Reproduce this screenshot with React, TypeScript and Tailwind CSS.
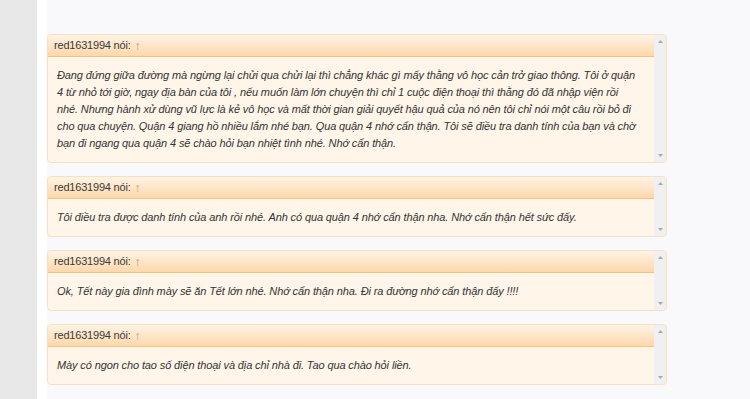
import React from "react";

const posts: string[][] = [
  [
    "Đang đứng giữa đường mà ngừng lại chửi qua chửi lại thì chẳng khác gì mấy thằng vô học cản trở giao thông. Tôi ở quận",
    "4 từ nhỏ tới giờ, ngay địa bàn của tôi , nếu muốn làm lớn chuyện thì chỉ 1 cuộc điện thoại thì thằng đó đã nhập viện rồi",
    "nhé. Nhưng hành xử dùng vũ lực là kẻ vô học và mất thời gian giải quyết hậu quả của nó nên tôi chỉ nói một câu rồi bỏ đi",
    "cho qua chuyện. Quận 4 giang hồ nhiều lắm nhé bạn. Qua quận 4 nhớ cẩn thận. Tôi sẽ điều tra danh tính của bạn và chờ",
    "bạn đi ngang qua quận 4 sẽ chào hỏi bạn nhiệt tình nhé. Nhớ cẩn thận.",
  ],
  [
    "Tôi điều tra được danh tính của anh rồi nhé. Anh có qua quận 4 nhớ cẩn thận nha. Nhớ cẩn thận hết sức đấy.",
  ],
  [
    "Ok, Tết này gia đình mày sẽ ăn Tết lớn nhé. Nhớ cẩn thận nha. Đi ra đường nhớ cẩn thận đấy !!!!",
  ],
  [
    "Mày có ngon cho tao số điện thoại và địa chỉ nhà đi. Tao qua chào hỏi liền.",
  ],
];

function QuoteBox({ lines }: { lines: string[] }) {
  return (
    <div className="flex border border-[#f8e0c4] rounded-[4px] overflow-hidden bg-[#fff5e9]">
      <div className="flex-1 min-w-0">
        <div className="h-[22px] flex items-center pl-[6px] text-[11px] text-[#3a3a3a] tracking-[-0.2px] bg-gradient-to-b from-[#fff3e4] to-[#fcd8ac] border-b border-[#f5c27f]">
          <span>red1631994 nói:</span>
          <span className="ml-[4px] text-[12px] text-[#e0905c]">↑</span>
        </div>
        <div className="pl-[9px] pr-[4px] pt-[10px] pb-[10px] text-[11px] leading-[17px] italic text-[#333] tracking-[-0.12px] whitespace-nowrap">
          {lines.map((l, i) => (
            <div key={i}>{l}</div>
          ))}
        </div>
      </div>
      <div className="w-[12px] bg-[#f0f0f0] flex flex-col items-center justify-between py-[5px]">
        <svg width="5" height="3" viewBox="0 0 5 3">
          <path d="M0 3 L2.5 0 L5 3 Z" fill="#a9a9a9" />
        </svg>
        <svg width="5" height="3" viewBox="0 0 5 3">
          <path d="M0 0 L2.5 3 L5 0 Z" fill="#a9a9a9" />
        </svg>
      </div>
    </div>
  );
}

export default function App() {
  return (
    <div
      className="w-[750px] h-[399px] flex overflow-hidden bg-[#f9f9fb]"
      style={{ fontFamily: '"Liberation Sans", Arial, sans-serif' }}
    >
      <div className="w-[37px] bg-[#e8e8e8] shrink-0" />
      <div className="w-[10px] bg-white shrink-0" />
      <div className="w-[620px] pt-[34px] flex flex-col gap-[13px]">
        {posts.map((p, i) => (
          <QuoteBox key={i} lines={p} />
        ))}
      </div>
    </div>
  );
}
